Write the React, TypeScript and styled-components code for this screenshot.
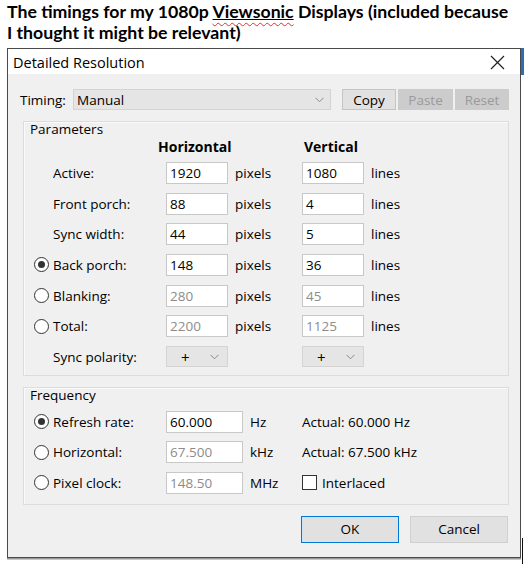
import React from "react";
import styled, { createGlobalStyle } from "styled-components";

const Global = createGlobalStyle`
  html, body { margin: 0; padding: 0; background: #fff; }
  body { width: 530px; height: 566px; overflow: hidden; }
`;

const Page = styled.div`
  width: 530px;
  height: 566px;
  font-family: "Open Sans", "Noto Sans", sans-serif;
`;

const Caption = styled.div`
  padding: 1px 0 0 7px;
  height: 48px;
  box-sizing: border-box;
  font-family: Lato, "Open Sans", sans-serif;
  font-weight: 700;
  font-size: 17.7px;
  line-height: 21px;
  color: #000;
  white-space: nowrap;
`;

const Squiggle = styled.span`
  text-decoration: underline wavy #e03030;
  text-decoration-thickness: 1px;
  text-underline-offset: 4px;
`;

const Underlined = styled.span`
  text-decoration: underline solid #000;
  text-decoration-thickness: 1px;
  text-underline-offset: 1px;
`;

const Stage = styled.div`
  display: flex;
  align-items: flex-start;
  padding-left: 7px;
`;

const Window = styled.div`
  width: 514px;
  box-sizing: border-box;
  border: 1px solid #4a4a4a;
  background: #f0f0f0;
  box-shadow: 0 1px 0 #9a9a9a, 0 2px 0 #c8c8c8;
  font-size: 13.5px;
  color: #000;
`;

const Side = styled.div`
  width: 4px;
  height: 516px;
  display: flex;
  flex-direction: column;
  justify-content: space-between;
`;

const SideTop = styled.div`
  height: 27px;
  width: 3px;
  background: #2a6fb0;
`;

const SideBottom = styled.div`
  height: 26px;
  width: 1px;
  margin-left: 1px;
  background: #111;
`;

const TitleBar = styled.div`
  height: 25px;
  background: #fff;
  display: flex;
  align-items: center;
  justify-content: space-between;
  padding: 1px 15px 0 5px;
  box-sizing: border-box;
  font-size: 14.5px;
`;

const Client = styled.div`
  padding: 15px 11px 14px 12px;
  display: flex;
  flex-direction: column;
`;

const TimingRow = styled.div`
  display: flex;
  align-items: center;
  height: 21px;
`;

const TimingLabel = styled.span`
  width: 53px;
`;

const Combo = styled.div<{ $w: number }>`
  width: ${(p) => p.$w}px;
  height: 21px;
  box-sizing: border-box;
  background: #e5e5e5;
  border: 1px solid #d4d4d4;
  display: flex;
  align-items: center;
  justify-content: space-between;
  padding: 0 6px 0 3px;
`;

const ComboCenter = styled(Combo)`
  padding: 0 8px 0 14px;
  font-size: 15px;
`;

const Chevron = () => (
  <svg width="9" height="6" viewBox="0 0 9 6">
    <path d="M0.5 0.8 L4.5 4.8 L8.5 0.8" fill="none" stroke="#8a8a8a" strokeWidth="1" />
  </svg>
);

const ToolButtons = styled.div`
  display: flex;
  gap: 2px;
  margin-left: 11px;
`;

const ToolButton = styled.div<{ $disabled?: boolean; $w: number }>`
  width: ${(p) => p.$w}px;
  height: 21px;
  box-sizing: border-box;
  display: flex;
  align-items: center;
  justify-content: center;
  background: ${(p) => (p.$disabled ? "#cccccc" : "#e1e1e1")};
  border: 1px solid ${(p) => (p.$disabled ? "#cccccc" : "#c4c4c4")};
  color: ${(p) => (p.$disabled ? "#9a9a9a" : "#000")};
`;

const GroupBox = styled.div<{ $top: number }>`
  margin: ${(p) => p.$top}px 0 0 3px;
  border: 1px solid #dcdcdc;
  box-shadow: inset 1px 1px 0 #fafafa;
  padding: 0 0 0 10px;
`;

const Legend = styled.div`
  height: 14px;
  line-height: 14px;
  margin-left: -4px;
`;

const ParamGrid = styled.div`
  display: grid;
  grid-template-columns: 19px 113px 62px 74px 62px auto;
  grid-auto-rows: 22px;
  row-gap: 8.67px;
  align-items: center;
  margin-top: 7px;
  padding-bottom: 7px;
`;

const Headers = styled.div`
  display: grid;
  grid-template-columns: 132px 136px auto;
  height: 18px;
  align-items: center;
  margin-top: 1px;
  font-weight: 700;
  font-size: 14px;
`;

const Header = styled.span<{ $col: number; $shift: number }>`
  grid-column: ${(p) => p.$col};
  margin-left: ${(p) => p.$shift}px;
`;

const FreqGrid = styled.div`
  display: grid;
  grid-template-columns: 19px 113px 77px 59px auto;
  grid-auto-rows: 22px;
  row-gap: 8.5px;
  align-items: center;
  margin-top: 9px;
  padding-bottom: 10px;
`;

const Label = styled.span<{ $col?: number }>`
  grid-column: ${(p) => p.$col ?? 2};
`;

const Unit = styled.span`
  padding-left: 7px;
`;

const Input = styled.div<{ $disabled?: boolean }>`
  height: 22px;
  box-sizing: border-box;
  background: #fff;
  border: 1px solid #c8c8c8;
  display: flex;
  align-items: center;
  padding-left: 3px;
  color: ${(p) => (p.$disabled ? "#8c8c8c" : "#000")};
`;

const Radio = styled.span<{ $checked?: boolean }>`
  width: 15px;
  height: 15px;
  box-sizing: border-box;
  border-radius: 50%;
  border: 1px solid #333;
  background: #fff;
  display: flex;
  align-items: center;
  justify-content: center;
  &::after {
    content: "";
    width: 7px;
    height: 7px;
    border-radius: 50%;
    background: ${(p) => (p.$checked ? "#333" : "transparent")};
  }
`;

const CheckRow = styled.span`
  display: flex;
  align-items: center;
  gap: 5px;
`;

const CheckBox = styled.span`
  width: 15px;
  height: 15px;
  box-sizing: border-box;
  border: 1px solid #333;
  background: #fff;
`;

const Footer = styled.div`
  display: flex;
  justify-content: flex-end;
  gap: 11px;
  margin-top: 11px;
  padding-right: 1px;
`;

const DialogButton = styled.div<{ $default?: boolean }>`
  width: 98px;
  height: 27px;
  box-sizing: border-box;
  display: flex;
  align-items: center;
  justify-content: center;
  background: #e1e1e1;
  border: 1px solid ${(p) => (p.$default ? "#0078d7" : "#d0d0d0")};
  box-shadow: ${(p) => (p.$default ? "inset 0 0 0 1px #cfe3f5" : "none")};
`;

const CloseIcon = () => (
  <svg width="15" height="15" viewBox="0 0 15 15">
    <path d="M1 1 L14 14 M14 1 L1 14" stroke="#222" strokeWidth="1.2" fill="none" />
  </svg>
);

type Row = { label: string; radio?: boolean; checked?: boolean; h: string; v: string; dis?: boolean };

const rows: Row[] = [
  { label: "Active:", h: "1920", v: "1080" },
  { label: "Front porch:", h: "88", v: "4" },
  { label: "Sync width:", h: "44", v: "5" },
  { label: "Back porch:", radio: true, checked: true, h: "148", v: "36" },
  { label: "Blanking:", radio: true, h: "280", v: "45", dis: true },
  { label: "Total:", radio: true, h: "2200", v: "1125", dis: true },
];

export default function App() {
  return (
    <Page>
      <Global />
      <Caption>
        The timings for my 1080p{" "}
        <Squiggle>
          <Underlined>Viewsonic</Underlined>
        </Squiggle>{" "}
        Displays (included because
        <br />I thought it might be relevant)
      </Caption>
      <Stage>
        <Window>
          <TitleBar>
            <span>Detailed Resolution</span>
            <CloseIcon />
          </TitleBar>
          <Client>
            <TimingRow>
              <TimingLabel>Timing:</TimingLabel>
              <Combo $w={258}>
                <span>Manual</span>
                <Chevron />
              </Combo>
              <ToolButtons>
                <ToolButton $w={54}>Copy</ToolButton>
                <ToolButton $w={55} $disabled>
                  Paste
                </ToolButton>
                <ToolButton $w={54} $disabled>
                  Reset
                </ToolButton>
              </ToolButtons>
            </TimingRow>

            <GroupBox $top={11}>
              <Legend>Parameters</Legend>
              <Headers>
                <Header $col={2} $shift={-8}>Horizontal</Header>
                <Header $col={3} $shift={2}>Vertical</Header>
              </Headers>
              <ParamGrid>
                {rows.map((r) => (
                  <React.Fragment key={r.label}>
                    {r.radio ? <Radio $checked={r.checked} /> : <span />}
                    <Label>{r.label}</Label>
                    <Input $disabled={r.dis}>{r.h}</Input>
                    <Unit>pixels</Unit>
                    <Input $disabled={r.dis}>{r.v}</Input>
                    <Unit>lines</Unit>
                  </React.Fragment>
                ))}
                <Label>Sync polarity:</Label>
                <ComboCenter $w={62}>
                  <span>+</span>
                  <Chevron />
                </ComboCenter>
                <span />
                <ComboCenter $w={62}>
                  <span>+</span>
                  <Chevron />
                </ComboCenter>
              </ParamGrid>
            </GroupBox>

            <GroupBox $top={11}>
              <Legend>Frequency</Legend>
              <FreqGrid>
                <Radio $checked />
                <Label>Refresh rate:</Label>
                <Input>60.000</Input>
                <Unit>Hz</Unit>
                <span>Actual: 60.000 Hz</span>

                <Radio />
                <Label>Horizontal:</Label>
                <Input $disabled>67.500</Input>
                <Unit>kHz</Unit>
                <span>Actual: 67.500 kHz</span>

                <Radio />
                <Label>Pixel clock:</Label>
                <Input $disabled>148.50</Input>
                <Unit>MHz</Unit>
                <CheckRow>
                  <CheckBox />
                  Interlaced
                </CheckRow>
              </FreqGrid>
            </GroupBox>

            <Footer>
              <DialogButton $default>OK</DialogButton>
              <DialogButton>Cancel</DialogButton>
            </Footer>
          </Client>
        </Window>
        <Side>
          <SideTop />
          <SideBottom />
        </Side>
      </Stage>
    </Page>
  );
}
